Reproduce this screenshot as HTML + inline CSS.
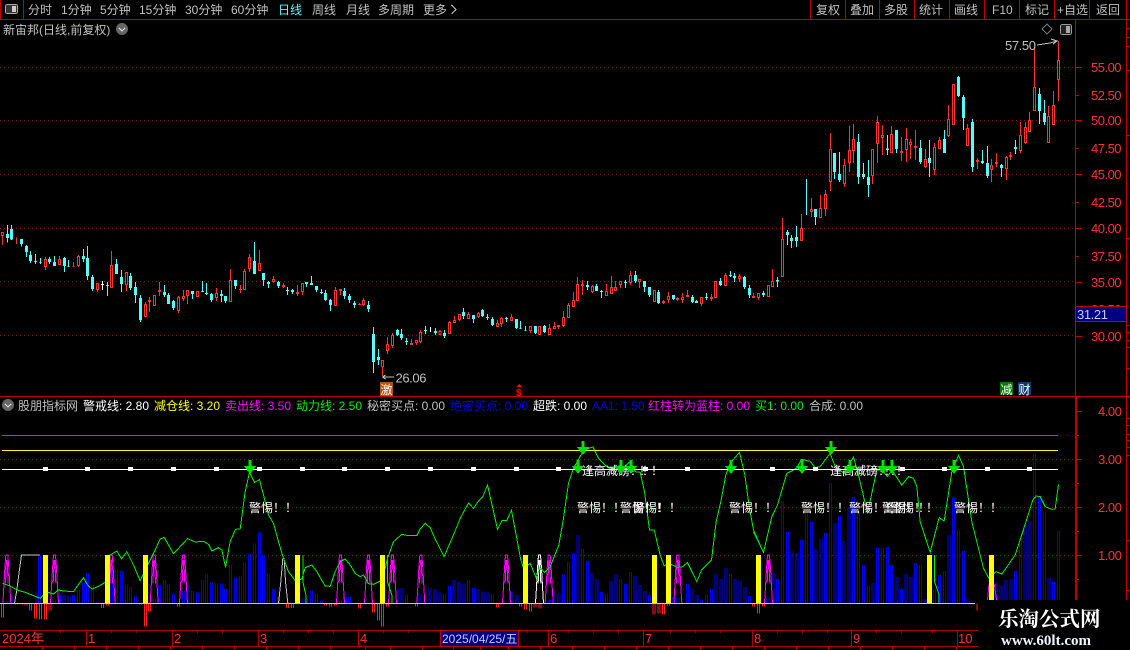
<!DOCTYPE html>
<html><head><meta charset="utf-8"><title>新宙邦</title>
<style>
html,body{margin:0;padding:0;background:#000;overflow:hidden}
svg{display:block;shape-rendering:crispEdges;font-family:"Liberation Sans","WenQuanYi Zen Hei","Noto Sans CJK SC",sans-serif;font-size:12px}
.rw{stroke:#ff3232;stroke-width:3;fill:none}
.rb{stroke:#ff3232;stroke-width:9;fill:none}
.h{stroke:#000;stroke-width:3;fill:none}
.cw{stroke:#54fcfc;stroke-width:3;fill:none}
.cb{stroke:#54fcfc;stroke-width:9;fill:none}
.g{fill:#c0c0c0}
.ax{fill:#ff3232;font-size:13px;letter-spacing:-.5px}
.ln{stroke:#c00000;stroke-width:1;fill:none}
.dot{stroke:#8c1010;stroke-width:1;stroke-dasharray:1 3;fill:none}
.bl{stroke:#0000f0;stroke-width:3;fill:none}
.rd{stroke:#ff2020;stroke-width:3;fill:none}
.gl{stroke:#00f000;stroke-width:3;fill:none}
.mg{stroke:#ff00ff;stroke-width:3;fill:none}
.wt{fill:#fff;font-size:12px}
</style></head><body>
<svg width="1130" height="650" viewBox="0 0 1130 650" xmlns="http://www.w3.org/2000/svg">
<defs>
<path id="pk" d="M-12 625L-9 575L-6 520L-3 480H3L6 520L9 575L12 625M-4 565L-1 495M4 565L1 495"/>
<path id="ar" d="M-1.5-13H1.5V-7H6L0 1L-6-7H-1.5Z" fill="#00e000"/>
</defs>
<rect width="1130" height="650" fill="#000"/>

<!-- main grid -->
<path class="dot" d="M0 67.5H1075M0 120.5H1075M0 174.5H1075M0 228.5H1075M0 281.5H1075M0 335.5H1075"/>

<!-- candles A -->
<g transform="matrix(.33333 0 0 .33333 .17 210)">
<path class="rw" d="M7 66V105M49 82V102M136 141V180M178 138V165M220 156V171M235 135V171M292 219V246M334 123V234M379 186V243M436 276V321M448 261V306M463 255V288M478 216V258M535 258V309M550 240V273M562 240V282M592 243V261M649 234V273M691 177V276M721 225V249M733 177V240M748 132V186M778 120V183M820 198V219M850 219V234M892 225V258M907 219V255M1006 231V288M1021 237V255M1078 279V285M1090 264V288"/>
<path class="rb" d="M7 66V78M136 147V171M178 147V165M220 168V170M235 138V168M292 219V240M334 165V234M379 186V225M436 282V321M448 270V276M463 255V288M478 240V246M535 261V303M550 258V267M562 240V258M592 243V261M649 249V264M691 210V276M721 237V240M733 183V240M748 141V177M778 159V183M820 207V216M850 225V231M892 246V252M907 219V246M1006 240V288M1021 237V243M1078 282V285M1090 270V285"/>
<path class="h" d="M7 69V75M136 150V168M178 150V162M235 141V165M292 222V237M334 168V231M379 189V222M436 285V318M463 258V285M535 264V300M550 261V264M562 243V255M592 246V258M649 252V261M691 213V273M733 186V237M748 144V174M778 162V180M820 210V213M907 222V243M1006 243V285M1090 273V282"/>
<path class="cw" d="M22 45V98M34 45V90M64 87V110M79 105V141M91 123V159M106 132V162M121 144V162M148 141V162M163 138V168M193 141V186M205 150V171M250 117V156M262 108V210M277 195V243M322 216V258M349 147V192M364 180V246M391 189V240M406 216V279M421 255V336M493 225V261M505 249V282M520 270V300M577 243V267M607 213V246M619 219V255M634 249V276M664 240V276M676 258V279M706 210V237M763 96V192M790 189V228M805 213V234M835 213V234M862 231V255M877 237V252M919 216V231M934 198V225M949 228V246M964 237V252M976 240V273M991 267V303M1033 234V267M1048 252V279M1063 273V294M1105 273V306M1120 351V489M1135 417V465"/>
<path class="cb" d="M22 72V84M34 57V88M64 87V102M79 108V126M91 135V153M106 153V156M121 156V158M148 147V156M163 156V168M193 144V168M205 168V170M250 138V147M262 144V198M277 201V237M322 225V228M349 162V192M364 201V222M391 198V234M406 231V255M421 264V330M493 246V255M505 255V282M520 273V294M577 243V252M607 243V246M619 249V252M634 252V270M664 252V258M676 258V273M706 210V228M763 153V192M790 189V210M805 216V222M835 216V228M862 240V243M877 240V246M919 216V222M934 219V225M949 228V240M964 246V249M976 249V270M991 270V285M1033 243V258M1048 258V270M1063 279V285M1105 285V297M1120 372V456M1135 441V450"/>
<path d="M307 213V240" stroke="#fff" stroke-width="3"/><path d="M307 222V225" stroke="#fff" stroke-width="9"/>
</g>

<!-- candles B -->
<g transform="matrix(.33333 0 0 .33333 370.17 240)">
<path class="rw" d="M37 360V408M52 291V342M67 279V324M124 297V315M139 300V315M151 270V309M209 270V285M238 243V282M253 228V249M268 222V243M295 216V237M325 216V234M382 240V261M394 231V261M424 222V243M481 258V279M508 258V285M538 252V285M553 246V267M565 255V267M580 213V261M595 189V234M610 156V201M622 111V183M637 120V165M667 135V159M709 132V168M724 108V162M736 123V153M751 123V144M781 93V135M808 117V144M853 150V186M880 180V192M895 156V189M922 171V183M937 159V189M952 150V171M994 171V198M1024 162V183M1036 123V174M1066 99V138M1108 102V126M1150 159V174M1165 159V180M1195 135V171M1207 87V141"/>
<path class="rb" d="M37 360V381M52 312V333M67 285V318M124 309V315M139 300V309M151 276V306M209 273V285M238 246V282M253 240V249M268 222V240M295 222V237M325 219V231M382 249V261M394 234V252M424 231V243M481 258V273M508 258V285M538 264V285M553 258V267M565 255V261M580 231V258M595 195V234M610 180V201M622 132V183M637 132V138M667 138V156M709 153V168M724 141V162M736 141V153M751 123V135M781 105V129M808 117V126M853 150V186M880 183V189M895 168V180M922 174V180M937 171V180M952 165V171M994 171V192M1024 171V177M1036 123V174M1066 105V138M1108 108V117M1150 168V174M1165 159V174M1195 135V171M1207 123V141"/>
<path class="h" d="M37 363V378M52 315V330M67 288V315M139 303V306M151 279V303M209 276V282M238 249V279M253 243V246M268 225V237M295 225V234M325 222V228M382 252V258M394 237V249M424 234V240M481 261V270M508 261V282M538 267V282M553 261V264M580 234V255M595 198V231M610 183V198M622 135V180M667 141V153M709 156V165M724 144V159M736 144V150M751 126V132M781 108V126M808 120V123M853 153V183M895 171V177M937 174V177M994 174V189M1036 126V171M1066 108V135M1108 111V114M1165 162V171M1195 138V168M1207 126V138"/>
<path class="cw" d="M82 267V288M94 267V300M109 294V315M166 258V282M196 264V285M223 270V294M280 204V237M310 225V249M337 207V231M352 222V240M367 231V258M409 231V246M439 237V267M451 243V267M466 258V273M496 258V282M523 255V279M652 123V150M679 132V153M694 150V174M766 120V144M796 93V129M823 123V156M838 141V171M865 150V192M910 165V180M967 165V189M979 180V189M1009 159V180M1051 114V138M1081 93V111M1093 99V126M1123 108V147M1138 135V174M1180 153V171M1222 111V141"/>
<path class="cb" d="M82 270V285M94 282V294M109 303V306M166 270V273M196 273V279M223 279V288M280 216V228M310 225V237M337 210V228M352 231V234M367 237V255M409 234V237M439 237V264M451 264V266M466 270V272M496 258V279M523 258V276M652 135V141M679 138V153M694 153V156M766 126V129M796 105V123M823 123V141M838 141V165M865 156V189M910 165V177M967 171V186M979 183V189M1009 171V174M1051 123V135M1081 105V108M1093 108V114M1123 111V141M1138 144V165M1180 159V165M1222 120V124"/>
<path d="M181 261V276" stroke="#fff" stroke-width="3"/>
</g>

<!-- candles C -->
<g transform="matrix(.33333 0 0 .33333 780.17 120)">
<path class="rw" d="M7 294V471M64 282V363M94 234V291M121 225V294M136 210V288M151 39V213M193 117V201M208 18V156M220 12V129M277 87V192"/>
<path class="rb" d="M7 357V471M64 324V363M94 267V276M121 264V294M136 222V267M151 87V186M193 135V192M208 90V129M220 57V93M277 87V168"/>
<path class="h" d="M7 360V468M64 327V360M94 270V273M121 267V291M136 225V264M151 90V183M193 138V189M208 93V126M220 60V90M277 90V165"/>
<path class="cw" d="M22 330V375M34 345V384M49 318V381M79 177V285M106 267V315M163 99V177M178 96V186M235 42V192M250 129V177M265 120V231"/>
<path class="cb" d="M22 336V345M34 354V363M49 351V363M106 267V291M163 99V156M178 162V180M235 66V171M250 162V171M265 171V195"/>
</g>

<!-- candles D -->
<g transform="matrix(.33333 0 0 .33333 800.17 0)">
<path class="rw" d="M232 348V489M247 375V465M274 378V459M304 411V483M319 384V486M331 417V477M346 390V480M376 447V504M403 429V525M418 411V447M445 315V411M460 252V375M502 372V438M532 474V507M574 477V546M589 459V501M619 468V540M631 456V480M661 366V459M676 366V432M688 336V396M703 141V333M745 318V429M760 273V375M775 123V303"/>
<path class="rb" d="M232 366V432M247 405V414M274 402V459M304 453V459M319 417V450M331 426V435M346 438V444M376 477V501M403 441V510M418 420V447M445 357V408M460 252V375M502 384V438M532 480V486M574 495V510M589 486V492M619 471V507M631 465V471M661 405V453M676 381V429M688 360V396M703 261V333M745 348V429M760 315V375M775 180V240"/>
<path class="h" d="M232 369V429M247 408V411M274 405V456M319 420V447M331 429V432M376 480V498M403 444V507M418 423V444M445 360V405M460 255V372M502 387V435M574 498V507M619 474V504M661 408V450M676 384V426M688 363V393M703 264V330M745 351V426M760 318V372M775 183V237"/>
<path class="cw" d="M262 405V465M289 390V459M361 420V492M388 420V531M433 390V459M475 228V291M490 285V390M517 357V516M547 450V492M562 438V534M604 492V531M646 420V462M718 264V372M733 300V375"/>
<path class="cb" d="M262 445V450M289 390V447M361 444V486M388 474V489M433 417V459M475 231V288M490 291V354M517 366V501M547 483V489M562 489V528M604 495V504M646 441V447M718 282V333M733 339V366"/>
</g>

<!-- annotations main -->
<text class="g" x="395.5" y="382.5" style="font-size:13px;letter-spacing:-.4px">26.06</text>
<path d="M382.5 377H394M382.5 377l3-2M382.5 377l3 2" stroke="#c0c0c0" fill="none"/>
<text class="g" x="1005" y="50" style="font-size:13px;letter-spacing:-.4px">57.50</text>
<path d="M1037 45L1050 43L1057 41M1051 39L1057 41L1053 44" stroke="#c0c0c0" fill="none"/>
<rect x="380" y="382" width="13" height="14" fill="#b8500f"/><text x="380.5" y="394" fill="#fff">激</text>
<path d="M519 384L522 387H516Z" fill="#f00"/><text x="516" y="396" fill="#f00" style="font-size:10px;font-weight:bold">$</text>
<rect x="1000" y="382" width="13" height="13" fill="#007a00"/><text x="1000.5" y="394" fill="#fff">减</text>
<rect x="1018" y="382" width="13" height="13" fill="#0a3a70"/><text x="1018.5" y="394" fill="#fff">财</text>

<!-- toolbar -->
<path class="ln" d="M0 19.5H1130M23.5 0V19M.5 0V19M810.5 0V19M845.5 0V19M879.5 0V19M914.5 0V19M949.5 0V19M984.5 0V19M1019.5 0V19M1054.5 0V19M1089.5 0V19M1126.5 0V19"/>
<rect x="5.5" y="4.5" width="12" height="9" rx="2" fill="#333" stroke="#aaa"/><rect x="12" y="6" width="4" height="6" fill="#ccc"/>
<g class="g">
<text x="28" y="14">分时</text><text x="61" y="14">1分钟</text><text x="100" y="14">5分钟</text><text x="139" y="14">15分钟</text><text x="185" y="14">30分钟</text><text x="231" y="14">60分钟</text>
<text x="278" y="14" style="fill:#54fcfc">日线</text><text x="312" y="14">周线</text><text x="346" y="14">月线</text><text x="378" y="14">多周期</text><text x="423" y="14">更多</text>
<text x="816" y="14">复权</text><text x="850" y="14">叠加</text><text x="884" y="14">多股</text><text x="919" y="14">统计</text><text x="954" y="14">画线</text><text x="992" y="14">F10</text><text x="1025" y="14">标记</text><text x="1057" y="14">+自选</text><text x="1096" y="14">返回</text>
<text x="3" y="34">新宙邦(日线,前复权)</text>
</g>
<path d="M451.5 5L456 9.5L451.5 14" stroke="#c0c0c0" fill="none"/>
<circle cx="122" cy="29" r="6" fill="#666"/><path d="M119 28L122 31L125 28" stroke="#ddd" fill="none"/>
<path d="M1047 24L1052 29L1047 34L1042 29Z" stroke="#777" fill="none"/>
<rect x="1060.5" y="24.5" width="11" height="10" rx="2" fill="#222" stroke="#999"/><rect x="1066" y="26" width="4" height="7" fill="#aaa"/>

<!-- axis -->
<path class="ln" d="M1075.5 20V396M1126.5 20V600M0 396.5H1130M1075.5 397V600M1076.5 397V600"/>
<path class="ln" d="M1076 67.5H1082M1076 95.5H1079M1076 120.5H1082M1076 148.5H1079M1076 174.5H1082M1076 202.5H1079M1076 228.5H1082M1076 256.5H1079M1076 282.5H1082M1076 336.5H1082M1077 411.5H1082M1077 435.5H1079M1077 459.5H1082M1077 483.5H1079M1077 507.5H1082M1077 531.5H1079M1077 555.5H1082M1077 579.5H1079"/>
<path class="ln" d="M1127 28.5H1130M1127 37.5H1130M1127 46.5H1130M1127 70.5H1130M1127 135.5H1130M1127 238.5H1130M1127 325.5H1130M1127 332.5H1130M1127 340.5H1130M1127 347.5H1130M1127 368.5H1130M1127 418.5H1130M1127 425.5H1130M1127 434.5H1130M1127 440.5H1130M1127 447.5H1130M1127 455.5H1130M1127 540.5H1130M1127 590.5H1130"/>
<g class="ax">
<text x="1091" y="72">55.00</text><text x="1091" y="100">52.50</text><text x="1091" y="125">50.00</text><text x="1091" y="153">47.50</text><text x="1091" y="179">45.00</text><text x="1091" y="207">42.50</text><text x="1091" y="233">40.00</text><text x="1091" y="261">37.50</text><text x="1091" y="287">35.00</text><text x="1091" y="314">32.50</text><text x="1091" y="341">30.00</text>
<text x="1098" y="416">4.00</text><text x="1098" y="464">3.00</text><text x="1098" y="512">2.00</text><text x="1098" y="560">1.00</text>
</g>
<rect x="1075.5" y="306.5" width="51" height="15" fill="#000080" stroke="#c00000"/>
<text x="1077" y="319" fill="#c8c8ff" style="font-size:13px;letter-spacing:-.4px">31.21</text>

<!-- legend -->
<circle cx="8" cy="405" r="6" fill="#666"/><path d="M5 404L8 407L11 404" stroke="#ddd" fill="none"/>
<text class="g" x="18" y="410">股朋指标网</text>
<text x="83" y="410" fill="#fff">警戒线: 2.80</text>
<text x="154" y="410" fill="#ffff00">减仓线: 3.20</text>
<text x="225" y="410" fill="#ff00ff">卖出线: 3.50</text>
<text x="296" y="410" fill="#00f000">动力线: 2.50</text>
<text class="g" x="367" y="410">秘密买点: 0.00</text>
<text x="450" y="410" fill="#0000f0">绝密买点: 0.00</text>
<text x="533" y="410" fill="#fff">超跌: 0.00</text>
<text x="592" y="410" fill="#0000f0">AA1: 1.50</text>
<text x="648" y="410" fill="#ff00ff">红柱转为蓝柱: 0.00</text>
<text x="755" y="410" fill="#00f000">买1: 0.00</text>
<text class="g" x="809" y="410">合成: 0.00</text>

<!-- indicator grid -->
<path class="dot" d="M0 459.5H1075M0 507.5H1075M0 555.5H1075"/>

<!-- zone 1 (x 0-380) -->
<g transform="matrix(.33333 0 0 .33333 .17 395)">
<g class="bl">
<defs><path id="b1" d="M21 625V618M35 625V605M110 625V590M118 625V480M163 625V612M178 625V598M192 625V600M206 625V603M220 625V600M235 625V585M250 625V563M262 625V534M277 625V570M292 625V622M334 625V520M349 625V525M364 625V528M379 625V568M391 625V576M406 625V605M463 625V610M478 625V570M493 625V555M505 625V568M520 625V595M550 625V588M564 625V570M577 625V588M592 625V592M607 625V555M619 625V538M634 625V562M649 625V565M664 625V565M676 625V582M691 625V510M706 625V547M721 625V543M733 625V504M748 625V477M763 625V445M778 625V412M790 625V480M805 625V535M820 625V582M835 625V604M908 625V609M919 625V612M934 625V586M949 625V597M964 625V616M1021 625V618M1036 625V606M1048 625V605M1105 625V622"/></defs>
<use href="#b1" x="-3"/><use href="#b1" x="3"/>
</g>
<g class="rd">
<defs><path id="r1" d="M7 625V667M49 625V628M63 625V628M78 625V632M91 625V647M106 625V671M121 625V674M136 625V674M149 625V647M307 625V639M322 625V632M421 625V628M436 625V695M448 625V650M535 625V635M862 625V639M877 625V639M976 625V632M991 625V635M1006 625V632M1078 625V641M1120 625V653M1135 625V677"/></defs>
<use href="#r1" x="-3"/><use href="#r1" x="3"/>
</g>
<g class="mg"><use href="#pk" x="20"/><use href="#pk" x="163"/><use href="#pk" x="333"/><use href="#pk" x="462"/><use href="#pk" x="550"/><use href="#pk" x="1021"/><use href="#pk" x="1105"/></g>
<path d="M43 625L50 585L57 530L64 480H120" stroke="#c0c0c0" stroke-width="3" fill="none"/>
<path d="M835 625L842 560L848 490H852L856 560L863 625" stroke="#c0c0c0" stroke-width="3" fill="none"/>
<path class="gl" d="M908 480V560L917 600V625"/>
<path class="gl" d="M7 565L30 573L50 585L75 592L100 602L120 610L130 600L145 592L160 597L175 585L190 588L220 590L235 568L250 548L262 570L275 582L295 574L315 562L330 480L350 468L364 492L380 470L400 510L420 557L445 505L465 465L480 432L492 427L520 476L562 431L585 441L610 439L625 448L635 468L655 458L665 465L676 517L690 440L706 403L720 402L735 290L748 232L763 262L778 254L790 300L805 360L820 385L835 440L850 490L865 530L885 557L905 552L915 518L935 510L950 530L975 573L990 574L1005 530L1020 500L1035 492L1050 510L1065 535L1080 545L1090 540L1105 566L1120 568L1140 558"/>
</g>

<!-- zone 2 (x 380-760) -->
<g transform="matrix(.33333 0 0 .33333 380.17 395)">
<g class="bl">
<defs><path id="b2" d="M51 625V582M65 625V579M79 625V598M120 625V595M150 625V579M165 625V582M179 625V592M193 625V598M208 625V573M222 625V555M237 625V561M251 625V567M265 625V555M280 625V579M294 625V582M308 625V590M323 625V593M337 625V598M395 625V590M410 625V600M508 625V615M522 625V590M536 625V595M550 625V538M565 625V501M580 625V477M593 625V420M607 625V462M622 625V498M636 625V534M650 625V552M664 625V591M679 625V595M693 625V558M707 625V537M721 625V552M736 625V567M751 625V531M765 625V543M780 625V570M794 625V588M808 625V600M880 625V606M893 625V608M922 625V567M936 625V580M950 625V600M964 625V615M979 625V598M994 625V582M1008 625V537M1022 625V552M1037 625V519M1051 625V537M1065 625V552M1080 625V558M1094 625V576M1108 625V603"/></defs>
<use href="#b2" x="-3"/><use href="#b2" x="3"/>
</g>
<g class="rd">
<defs><path id="r2" d="M7 625V695M22 625V635M109 625V635M352 625V638M366 625V628M421 625V635M436 625V644M451 625V650M465 625V638M479 625V641M822 625V659M836 625V656M850 625V659M865 625V632M1120 625V635M1135 625V656"/></defs>
<use href="#r2" x="-3"/><use href="#r2" x="3"/>
</g>
<g class="mg"><use href="#pk" x="37"/><use href="#pk" x="122"/><use href="#pk" x="379"/><use href="#pk" x="507"/><use href="#pk" x="893"/></g>
<use href="#pk" x="478" stroke="#fff" stroke-width="3" fill="none"/>
<path class="gl" d="M22 480V560L35 600V625"/>
<path class="gl" d="M0 558L15 520L22 490L40 440L65 418L85 422L110 422L120 402L135 385L150 398L165 432L192 485L222 415L240 370L265 324L280 340L295 318L308 305L322 270L338 340L352 403L366 376L380 376L394 346L408 420L421 490L430 520L450 505L468 548L480 517L493 533L510 515L536 450L550 370L565 265L580 220L608 170L625 160L638 156L655 190L680 215L720 225L750 200L765 230L780 232L793 290L808 405L822 405L840 480L852 513L865 505L893 517L907 515L922 503L950 560L964 525L994 495L1008 380L1022 320L1037 240L1050 205L1078 172L1094 240L1108 340L1120 405L1140 450"/>
</g>

<!-- zone 3 (x 750-1075) -->
<g transform="matrix(.33333 0 0 .33333 750.17 395)">
<g class="bl">
<defs><path id="b3" d="M0 625V603M54 625V606M68 625V534M82 625V552M97 625V318M112 625V411M125 625V468M140 625V474M154 625V435M169 625V351M184 625V381M198 625V462M212 625V432M226 625V414M241 625V264M254 625V384M268 625V363M282 625V438M297 625V336M310 625V306M325 625V348M340 625V510M355 625V573M368 625V564M382 625V459M397 625V459M412 625V456M424 625V510M440 625V546M454 625V582M468 625V537M482 625V546M496 625V504M511 625V510M525 625V612M553 625V582M568 625V540M583 625V528M596 625V420M610 625V306M625 625V405M640 625V468M653 625V612M738 625V561M753 625V573M768 625V555M782 625V552M796 625V528M811 625V432M825 625V387M840 625V378M853 625V177M868 625V303M883 625V351M896 625V549M910 625V561M925 625V408"/></defs>
<use href="#b3" x="-3"/><use href="#b3" x="3"/>
</g>
<g class="rd">
<defs><path id="r3" d="M10 625V635M25 625V656M40 625V635M665 625V628"/></defs>
<use href="#r3" x="-3"/><use href="#r3" x="3"/>
</g>
<path d="M680 625V647" stroke="#ff2020" stroke-width="3"/>
<use class="mg" href="#pk" x="55"/>
<path class="mg" d="M712 615L716 570H733L739 615"/>
<path class="gl" d="M553 480V560L567 600V625"/>
<path class="gl" d="M10 410L40 472L65 365L82 330L110 235L125 228L140 218L154 193L180 199L195 218L210 215L240 175L255 215L282 235L310 186L325 240L352 355L380 225L395 225L412 245L425 225L455 270L475 245L490 250L500 275L510 380L540 472L567 368L582 378L605 230L625 181L640 215L665 380L700 520L715 548L738 530L755 537L795 480L825 388L848 315L858 303L870 305L885 335L905 343L915 342L925 268"/>
</g>

<!-- yellow bars -->
<g fill="#ffff00">
<rect x="43" y="555" width="5" height="48"/><rect x="105" y="555" width="5" height="48"/><rect x="143" y="555" width="5" height="48"/><rect x="295" y="555" width="5" height="48"/><rect x="380" y="555" width="5" height="48"/><rect x="523" y="555" width="5" height="48"/><rect x="652" y="555" width="5" height="48"/><rect x="666" y="555" width="5" height="48"/><rect x="756" y="555" width="5" height="48"/><rect x="927" y="555" width="5" height="48"/><rect x="989" y="555" width="5" height="48"/>
</g>

<!-- baseline and horizontals -->
<path d="M0 603.5H975" stroke="#c8c8c8"/>
<path d="M2 435.5H1058" stroke="#ff00ff"/>
<path d="M2 450.5H1058" stroke="#ffff00"/>
<path d="M2 469.5H1058" stroke="#fff"/>
<g fill="#fff">
<rect x="43" y="467" width="5" height="4"/><rect x="85" y="467" width="5" height="4"/><rect x="128" y="467" width="5" height="4"/><rect x="171" y="467" width="5" height="4"/><rect x="214" y="467" width="5" height="4"/><rect x="257" y="467" width="5" height="4"/><rect x="300" y="467" width="5" height="4"/><rect x="342" y="467" width="5" height="4"/><rect x="385" y="467" width="5" height="4"/><rect x="428" y="467" width="5" height="4"/><rect x="471" y="467" width="5" height="4"/><rect x="514" y="467" width="5" height="4"/><rect x="556" y="467" width="5" height="4"/><rect x="643" y="467" width="5" height="4"/><rect x="685" y="467" width="5" height="4"/><rect x="770" y="467" width="5" height="4"/><rect x="813" y="467" width="5" height="4"/><rect x="900" y="467" width="5" height="4"/><rect x="942" y="467" width="5" height="4"/><rect x="985" y="467" width="5" height="4"/><rect x="1027" y="467" width="5" height="4"/>
</g>

<!-- signal text -->
<g class="wt">
<text x="249" y="512">警惕！！</text><text x="577" y="512">警惕！！</text><text x="620" y="512">警惕！！</text><text x="633" y="512">警惕！！</text><text x="729" y="512">警惕！！</text><text x="801" y="512">警惕！！</text><text x="849" y="512">警惕！！</text><text x="882" y="512">警惕！！</text><text x="890" y="512">警惕！！</text><text x="954" y="512">警惕！！</text>
<text x="582" y="475">逢高减磅！！</text><text x="830" y="475">逢高减磅！！</text><text x="639" y="475">！！</text><text x="884" y="475">！！</text>
</g>

<!-- arrows -->
<use href="#ar" x="250" y="473"/><use href="#ar" x="583" y="454"/><use href="#ar" x="578" y="473"/><use href="#ar" x="621" y="473"/><use href="#ar" x="631" y="473"/><use href="#ar" x="731" y="473"/><use href="#ar" x="802" y="473"/><use href="#ar" x="831" y="454"/><use href="#ar" x="850" y="473"/><use href="#ar" x="883" y="473"/><use href="#ar" x="892" y="473"/><use href="#ar" x="954" y="473"/>

<!-- date row -->
<path d="M0 630.5H978M0 646.5H978M86.5 631V646M172.5 631V646M258.5 631V646M358.5 631V646M548.5 631V646M643.5 631V646M752.5 631V646M851.5 631V646M957.5 631V646" stroke="#b00000" fill="none"/>
<path d="M35.5 631V633M60.5 631V633M111.5 631V633M136.5 631V633M197.5 631V633M222.5 631V633M283.5 631V633M308.5 631V633M333.5 631V633M383.5 631V633M408.5 631V633M527.5 631V633M568.5 631V633M593.5 631V633M618.5 631V633M670.5 631V633M695.5 631V633M720.5 631V633M777.5 631V633M802.5 631V633M827.5 631V633M876.5 631V633M901.5 631V633M932.5 631V633M42.5 647V650M74.5 647V650M106.5 647V650M138.5 647V650M170.5 647V650M202.5 647V650M234.5 647V650M266.5 647V650M298.5 647V650M330.5 647V650M365.5 647V650M390.5 647V650M422.5 647V650M453.5 647V650M480.5 647V650M508.5 647V650M540.5 647V650M572.5 647V650M604.5 647V650M636.5 647V650M668.5 647V650M700.5 647V650M732.5 647V650M764.5 647V650M796.5 647V650M828.5 647V650M860.5 647V650M892.5 647V650M924.5 647V650M956.5 647V650" stroke="#b00000" fill="none"/>
<rect x="440.5" y="630.5" width="78" height="16" fill="#000080" stroke="#c00000"/>
<text x="442" y="643" fill="#c8c8ff">2025/04/25/五</text>
<g fill="#ff3232" style="font-size:13px">
<text x="2" y="643">2024年</text><text x="88" y="643">1</text><text x="174" y="643">2</text><text x="260" y="643">3</text><text x="360" y="643">4</text><text x="550" y="643">6</text><text x="645" y="643">7</text><text x="754" y="643">8</text><text x="853" y="643">9</text><text x="958" y="643">10</text>
</g>

<!-- watermark -->
<rect x="978" y="600" width="152" height="50" fill="#000"/>
<text x="998" y="626" fill="#fff" style="font-family:'Liberation Serif','Noto Serif CJK SC',serif;font-size:20.5px;font-weight:bold">乐淘公式网</text>
<text x="1001" y="645" fill="#eef4ff" style="font-family:'Liberation Serif',serif;font-size:15px;font-weight:bold">www.60lt.com</text>
</svg>
</body></html>
